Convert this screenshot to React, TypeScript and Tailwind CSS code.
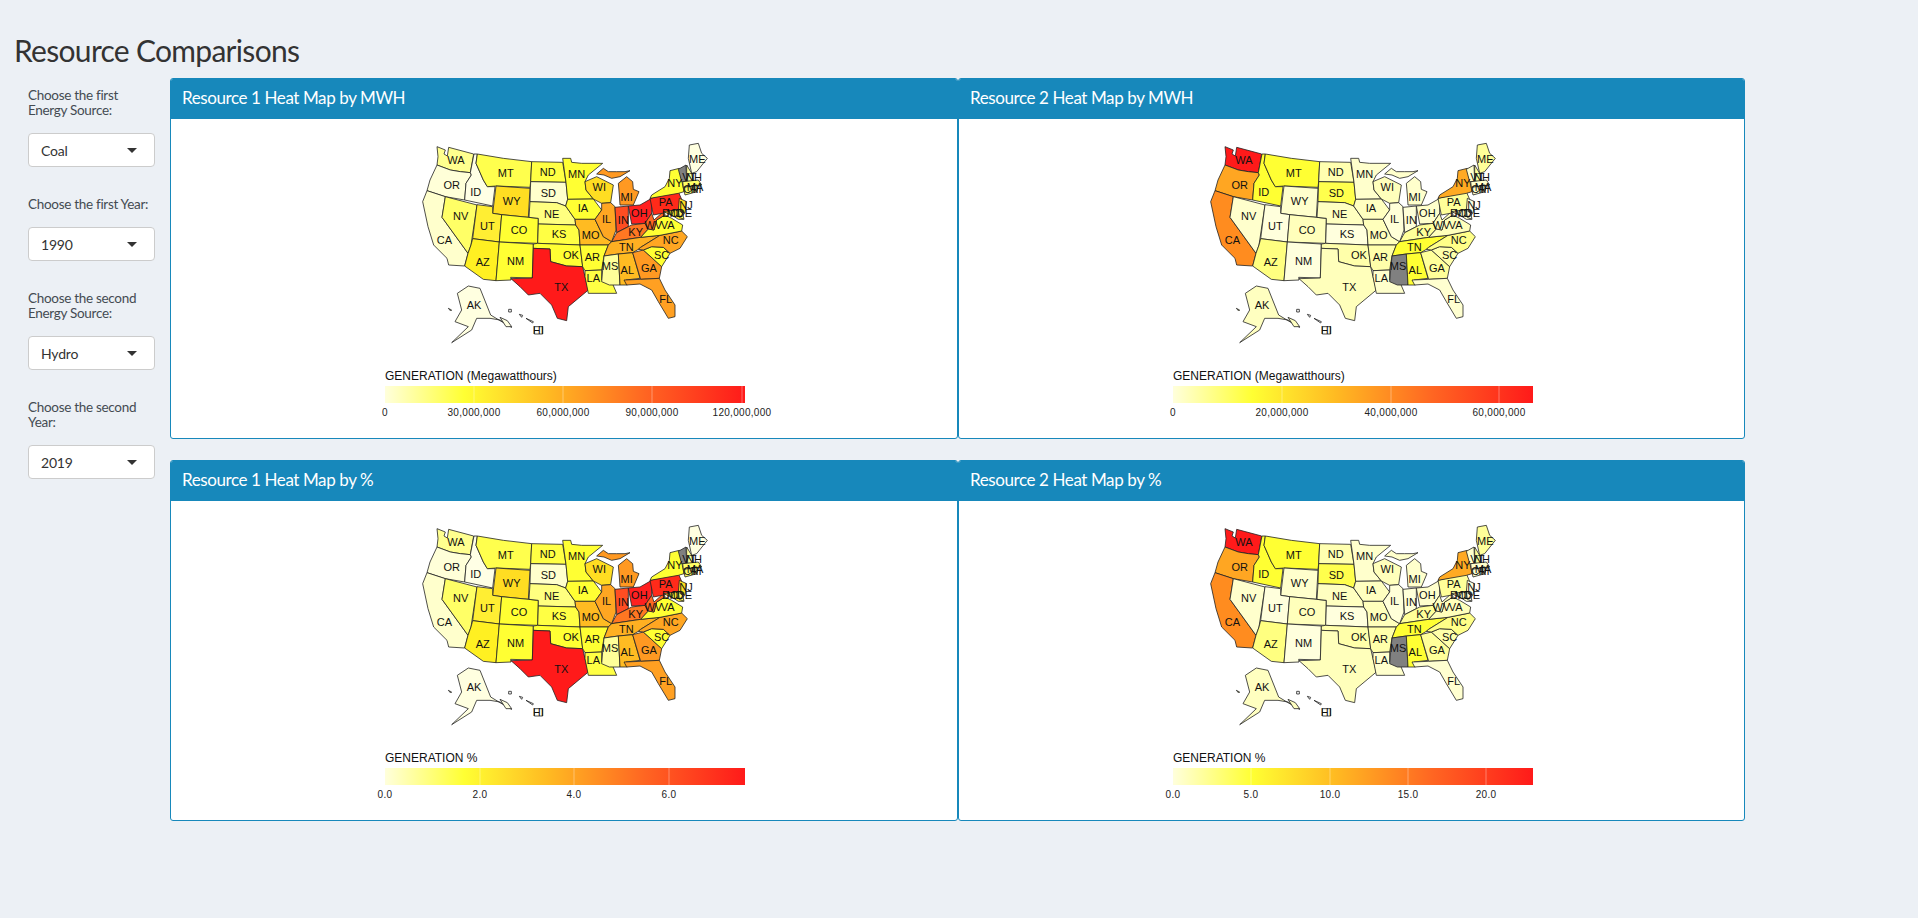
import { FC } from 'react'

// outlines traced from the plot, coords are in a 1020x690 box (3x the plot size)
const STATES: Record<string, string> = {
  WA: '111,50 136,60 132,72 142,78 146,52 221,72 211,128 181,125 151,120 111,105 114,80',
  OR: '111,105 151,120 181,125 211,128 214,135 198,160 194,210 136,200 81,182 90,150',
  CA: '81,182 136,200 126,262 204,370 194,408 146,405 141,385 101,345 84,290 68,215',
  NV: '136,200 231,225 213,345 204,370 126,262',
  ID: '222,72 232,72 228,100 250,150 262,170 285,170 278,228 194,210 198,160 214,135 211,128',
  MT: '232,72 310,85 395,95 392,155 390,172 288,168 262,170 250,150 228,100',
  WY: '288,168 390,175 385,262 305,254 278,250',
  UT: '231,224 278,230 278,250 305,254 298,336 218,326',
  CO: '305,254 415,265 413,340 298,336',
  AZ: '218,326 298,336 288,452 250,448 194,408 204,370 213,345',
  NM: '298,336 400,342 397,444 332,442 333,450 288,452',
  ND: '395,95 488,97 498,157 392,155',
  SD: '392,155 498,157 503,208 497,228 470,218 390,215',
  NE: '390,215 470,218 497,228 525,268 527,285 415,282 415,265 387,262',
  KS: '415,282 527,285 537,300 540,345 413,340',
  OK: '400,342 413,340 540,345 548,410 500,408 452,395 450,357 400,355',
  TX: '400,355 450,357 452,395 500,408 548,410 555,440 565,480 505,530 500,572 472,565 455,525 420,490 385,495 360,470 333,446 397,444',
  MN: '488,85 512,85 515,97 545,100 608,100 565,135 555,155 558,180 580,207 503,208 498,157',
  IA: '503,208 580,207 605,240 585,268 525,268 497,228',
  MO: '525,268 585,268 610,320 635,335 625,345 540,345 537,300 527,285',
  AR: '540,345 625,345 612,378 605,420 555,422 548,410',
  LA: '555,422 605,420 605,450 635,455 650,490 600,490 565,490 555,440',
  WI: '555,155 590,140 640,165 632,218 605,220 580,207 558,180',
  IL: '605,220 632,218 645,230 648,300 635,335 610,320 585,268 605,240',
  MI: '658,195 655,160 680,140 698,155 700,178 717,185 700,225 660,225',
  UP: '590,132 610,115 625,125 650,125 675,125 690,122 660,140 635,145 612,135',
  IN: '645,232 685,228 685,290 650,308',
  OH: '685,228 720,225 755,205 755,250 735,280 695,282',
  KY: '635,335 650,308 695,285 735,280 745,297 722,322',
  TN: '612,378 625,345 635,335 722,322 780,316 722,352 715,358 698,368 655,372',
  MS: '612,378 655,372 660,465 628,465 605,455 608,420',
  AL: '655,372 698,368 720,445 678,450 682,465 660,465',
  GA: '698,368 730,360 785,410 778,445 722,448',
  FL: '672,450 722,448 778,445 795,480 825,525 825,560 805,565 775,515 755,480 720,462 680,465',
  SC: '730,360 755,350 790,352 810,370 785,410',
  NC: '715,358 722,352 780,316 845,303 862,320 840,355 810,370 790,352 755,350 730,360',
  VA: '722,322 745,297 762,300 770,270 795,255 815,265 848,285 845,303 780,316',
  WV: '735,280 755,250 762,270 790,245 795,255 770,270 762,300 745,297',
  PA: '750,205 835,185 850,220 838,240 760,255',
  NY: '755,195 795,170 808,145 810,122 838,115 852,185 835,190 750,205',
  ME: '868,45 895,40 905,70 922,85 890,125 875,130 865,85',
  VT: '835,118 858,105 860,155 845,155',
  NH: '860,105 875,130 880,155 860,155',
  MA: '848,155 895,150 905,165 850,172',
  CT: '850,172 880,168 880,188 855,195',
  RI: '880,165 892,165 892,185 880,188',
  NJ: '838,205 860,215 855,250 835,240',
  MD: '790,245 840,238 850,268 835,268 815,255',
  DE: '835,240 848,250 852,268 838,262',
  AK: '172,490 205,468 240,475 272,555 300,572 335,592 300,570 270,565 230,565 215,600 155,638 205,590 165,575 185,540',
  A2: '145,535 155,540 152,543',
  A3: '300,562 322,572 335,590 318,590',
  HI: '326,538 334,538 334,546 326,546',
  H2: '358,553 368,556 365,562',
  H3: '378,565 400,575 398,579',
  H4: '403,590 428,590 428,612 403,612',
}

const LABELS: [string, number, number][] = [
  ['WA', 168, 90], ['OR', 155, 165], ['CA', 133, 330], ['ID', 227, 185], ['NV', 182, 258], ['MT', 317, 130],
  ['WY', 335, 213], ['UT', 262, 288], ['CO', 357, 300], ['AZ', 248, 396], ['NM', 347, 393], ['ND', 443, 127],
  ['SD', 445, 190], ['NE', 455, 252], ['KS', 477, 312], ['OK', 513, 375], ['TX', 484, 471], ['MN', 530, 132],
  ['IA', 549, 234], ['MO', 572, 315], ['AR', 577, 380], ['LA', 580, 445], ['WI', 598, 171], ['IL', 620, 267],
  ['MI', 680, 200], ['IN', 670, 270], ['OH', 718, 250], ['KY', 707, 307], ['TN', 679, 352], ['MS', 630, 408],
  ['AL', 682, 421], ['GA', 747, 414], ['FL', 797, 506], ['SC', 785, 375], ['NC', 812, 330], ['VA', 803, 285],
  ['WV', 760, 285], ['PA', 797, 216], ['NY', 825, 158], ['ME', 892, 87], ['AK', 222, 525], ['VT', 868, 140],
  ['NH', 882, 140], ['MA', 885, 172], ['CT', 872, 178], ['RI', 888, 178], ['NJ', 858, 225], ['DE', 853, 250],
  ['MD', 825, 248], ['DC', 810, 248], ['HI', 415, 600],
]

const PALE = '#ffffe0'
const FIRST: Record<string, string> = {
  WA: '#ffff8f', OR: '#ffffd8', CA: '#ffffcc', ID: '#ffffe5', NV: '#ffff66', MT: '#ffff4d', WY: '#ffdd22', UT: '#ffee33',
  CO: '#ffff33', AZ: '#fff022', NM: '#ffff33', ND: '#ffff44', SD: '#ffffcc', NE: '#ffff80', KS: '#ffff44', OK: '#ffff33',
  TX: '#ff1a1a', MN: '#ffff33', IA: '#ffff33', MO: '#ffbb22', AR: '#ffff33', LA: '#ffff44', WI: '#ffdd22', IL: '#ffa622',
  MI: '#ff9922', UP: '#ff9922', IN: '#ff4d22', OH: '#ff2020', KY: '#ff7722', TN: '#ffb022', MS: '#ffff99', AL: '#ffbb22',
  GA: '#ff9922', FL: '#ffa022', SC: '#ffff33', NC: '#ffa622', VA: '#ffff33', WV: '#ff6622', PA: '#ff2a1a', NY: '#ffff33',
  ME: PALE, VT: '#808080', NH: '#ffff99', MA: '#ffff66', CT: '#ffff66', RI: '#ffff99', NJ: '#ffdd22', DE: '#ffff66',
  MD: '#ffee33', AK: PALE, A2: PALE, A3: PALE,
}
const SECOND: Record<string, string> = {
  WA: '#ff1a1a', OR: '#ffa622', CA: '#ff8c1f', ID: '#ffff33', MT: '#ffff33', NV: '#ffffcc', UT: '#ffffdc', WY: '#ffffcc',
  CO: '#ffffbb', AZ: '#ffff80', NM: '#ffffdd', ND: '#ffffb0', SD: '#ffff4d', NE: '#ffffc0', KS: '#ffffdd', OK: '#ffffaa',
  TX: '#ffffbb', MN: '#ffffcc', IA: '#ffffc0', MO: '#ffffbb', AR: '#ffffaa', LA: '#ffffcc', WI: '#ffffbb', IL: '#ffffd8',
  MI: '#ffffcc', UP: '#ffffcc', IN: '#ffffd8', OH: '#ffffcc', KY: '#ffff99', TN: '#ffff33', MS: '#808080', AL: '#ffff33',
  GA: '#ffff99', FL: '#ffffd0', SC: '#ffffaa', NC: '#ffff88', VA: '#ffffbb', WV: '#ffffbb', PA: '#ffff99', NY: '#ffaa22',
  ME: '#ffff99', VT: '#ffffcc', NH: '#ffff99', MA: '#ffffcc', CT: '#ffffcc', RI: '#ffffcc', NJ: PALE, DE: PALE, MD: '#ffffcc',
  AK: '#ffffc0', A2: '#ffffc0', A3: '#ffffc0',
}

const plotFont = '"Liberation Sans", Arial, sans-serif'

const StateMap: FC<{ fills: Record<string, string> }> = ({ fills }) => (
  <svg viewBox="0 0 1020 690" className="block w-[340px] h-[230px] ml-[36px]">
    {Object.entries(STATES).map(([id, points]) => (
      <polygon key={id} points={points} fill={fills[id] ?? '#ffffff'} stroke="#222222" strokeWidth="2.4" strokeLinejoin="round" />
    ))}
    {LABELS.map(([name, x, y]) => (
      <text key={name} x={x} y={y + 12} textAnchor="middle" fontSize="33" fill="#111111" fontFamily={plotFont}>
        {name}
      </text>
    ))}
  </svg>
)

interface LegendProps {
  id: string
  title: string
  ticks: [string, number][]
}

const Legend: FC<LegendProps> = ({ id, title, ticks }) => (
  <svg viewBox="0 0 440 60" className="block w-[440px] h-[60px] ml-[1px] mt-[6px]">
    <defs>
      <linearGradient id={id}>
        <stop offset="0" stopColor="#ffffdc" />
        <stop offset="0.22" stopColor="#ffff33" />
        <stop offset="0.45" stopColor="#ffbb22" />
        <stop offset="0.72" stopColor="#ff6622" />
        <stop offset="1" stopColor="#ff1a1a" />
      </linearGradient>
    </defs>
    <text x="20" y="14" fontSize="12" fill="#111111" fontFamily={plotFont}>{title}</text>
    <rect x="20" y="20" width="360" height="17" fill={`url(#${id})`} />
    {ticks.map(([label, x]) => (
      <g key={label}>
        <line x1={20 + x} x2={20 + x} y1="20" y2="37" stroke="#ffffff" strokeOpacity={x === 0 ? 0 : 0.35} />
        <text x={20 + x} y="50" textAnchor="middle" fontSize="10" letterSpacing="0.3" fill="#222222" fontFamily={plotFont}>{label}</text>
      </g>
    ))}
  </svg>
)

interface PanelProps extends LegendProps {
  heading: string
  fills: Record<string, string>
}

const Panel: FC<PanelProps> = ({ heading, fills, ...legend }) => (
  <div className="h-[361px] flex flex-col rounded-[3px] border border-[#1788bb] bg-white overflow-hidden">
    <div className="h-[40px] shrink-0 bg-[#1788bb] px-[11px] pb-[2px] flex items-center text-[17px] tracking-[-0.4px] text-white">{heading}</div>
    <div className="flex-1 pl-[193px] pt-[11px]">
      <StateMap fills={fills} />
      <Legend {...legend} />
    </div>
  </div>
)

const Dropdown: FC<{ label: string; value: string }> = ({ label, value }) => (
  <div>
    <div className="text-[13.5px] leading-[15px] tracking-[-0.3px] text-[#444b52] mb-[15px] w-[127px]">{label}</div>
    <div className="h-[34px] w-[127px] rounded-[4px] border border-[#cccccc] bg-white pl-[12px] pr-[17px] flex items-center justify-between text-[14px] tracking-[-0.2px] text-[#333333]">
      <span>{value}</span>
      <span className="w-0 h-0 border-x-[5px] border-t-[5px] border-x-transparent border-t-[#333333]" />
    </div>
  </div>
)

const TICKS_1: [string, number][] = [['0', 0], ['30,000,000', 89], ['60,000,000', 178], ['90,000,000', 267], ['120,000,000', 357]]
const TICKS_2: [string, number][] = [['0', 0], ['20,000,000', 109], ['40,000,000', 218], ['60,000,000', 326]]
const TICKS_3: [string, number][] = [['0.0', 0], ['2.0', 95], ['4.0', 189], ['6.0', 284]]
const TICKS_4: [string, number][] = [['0.0', 0], ['5.0', 78], ['10.0', 157], ['15.0', 235], ['20.0', 313]]

export default function App() {
  return (
    <div className="min-h-screen bg-[#ecf0f5] text-[#333333] font-['Lato',sans-serif]">
      <h2 className="pt-[32px] pl-[14px] mb-[10px] text-[30px] leading-[36px] tracking-[-0.7px] font-normal">Resource Comparisons</h2>
      <div className="flex">
        <div className="w-[170px] shrink-0 pl-[28px] pt-[10px] flex flex-col gap-[30px]">
          <Dropdown label="Choose the first Energy Source:" value="Coal" />
          <Dropdown label="Choose the first Year:" value="1990" />
          <Dropdown label="Choose the second Energy Source:" value="Hydro" />
          <Dropdown label="Choose the second Year:" value="2019" />
        </div>
        <div className="w-[1575px] grid grid-cols-[788px_787px] gap-y-[21px]">
          <Panel id="legend-a" heading="Resource 1 Heat Map by MWH" fills={FIRST} title="GENERATION (Megawatthours)" ticks={TICKS_1} />
          <Panel id="legend-b" heading="Resource 2 Heat Map by MWH" fills={SECOND} title="GENERATION (Megawatthours)" ticks={TICKS_2} />
          <Panel id="legend-c" heading="Resource 1 Heat Map by %" fills={FIRST} title="GENERATION %" ticks={TICKS_3} />
          <Panel id="legend-d" heading="Resource 2 Heat Map by %" fills={SECOND} title="GENERATION %" ticks={TICKS_4} />
        </div>
      </div>
    </div>
  )
}
